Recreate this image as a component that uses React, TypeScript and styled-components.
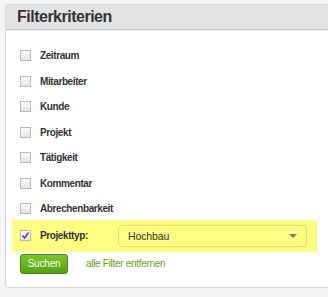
import styled, { createGlobalStyle } from "styled-components";

const GlobalStyle = createGlobalStyle`
  html, body {
    margin: 0;
    padding: 0;
    background: #f4f4f4;
    font-family: "Liberation Sans", Arial, sans-serif;
  }
`;

const Page = styled.div`
  width: 328px;
  height: 297px;
  padding: 4px 0 0 5px;
  box-sizing: border-box;
  overflow: hidden;
`;

const Panel = styled.div`
  width: 340px;
  height: 284px;
  box-sizing: border-box;
  background: #fff;
  border: 1px solid #d6d6d6;
  border-radius: 4px;
  overflow: hidden;
`;

const Header = styled.div`
  height: 24px;
  background: #e3e3e3;
  border-bottom: 1px solid #c9c9c9;
  box-shadow: 0 1px 0 #ececec;
  padding-left: 11px;
  display: flex;
  align-items: center;
`;

const Title = styled.h2`
  margin: 0;
  font-size: 16px;
  letter-spacing: -0.5px;
  font-weight: bold;
  color: #333;
`;

const Body = styled.div`
  padding: 13px 0 0 6px;
  display: flex;
  flex-direction: column;
`;

const Row = styled.div<{ $highlight?: boolean }>`
  height: ${(p) => (p.$highlight ? "32px" : "25.5px")};
  margin-top: ${(p) => (p.$highlight ? "-2px" : "0")};
  display: flex;
  align-items: center;
  width: 305px;
  padding-left: 8px;
  box-sizing: border-box;
  background: ${(p) => (p.$highlight ? "#fdfd82" : "transparent")};
`;

const Box = styled.span<{ $checked?: boolean }>`
  width: 9px;
  height: 9px;
  border: 1px solid #b9b9b9;
  background: linear-gradient(#fbfbfb, #e4e4e4);
  display: flex;
  align-items: center;
  justify-content: center;
  flex-shrink: 0;
`;

const Label = styled.span`
  margin-left: 9px;
  font-size: 10px;
  letter-spacing: -0.4px;
  font-weight: bold;
  color: #333;
  width: 78px;
`;

const Select = styled.div`
  width: 189px;
  height: 22px;
  box-sizing: border-box;
  border: 1px solid #e2dc6a;
  border-radius: 4px;
  display: flex;
  align-items: center;
  justify-content: space-between;
  padding: 0 9px 0 9px;
  font-size: 10.5px;
  letter-spacing: -0.1px;
  color: #333;
`;

const Arrow = styled.span`
  width: 0;
  height: 0;
  border-left: 4px solid transparent;
  border-right: 4px solid transparent;
  border-top: 4px solid #777;
`;

const Actions = styled.div`
  display: flex;
  align-items: center;
  padding: 2px 0 0 8px;
  gap: 18px;
`;

const Button = styled.button`
  width: 48px;
  height: 20px;
  border: 1px solid #4b8a10;
  border-radius: 3px;
  background: linear-gradient(#80c62c, #559f14);
  color: #fff;
  font-family: inherit;
  font-size: 10px;
  letter-spacing: -0.2px;
  padding: 0;
`;

const Link = styled.a`
  color: #6aa121;
  font-size: 10px;
  letter-spacing: -0.3px;
  text-decoration: none;
`;

const filters = [
  "Zeitraum",
  "Mitarbeiter",
  "Kunde",
  "Projekt",
  "Tätigkeit",
  "Kommentar",
  "Abrechenbarkeit",
];

export default function App() {
  return (
    <>
      <GlobalStyle />
      <Page>
        <Panel>
          <Header>
            <Title>Filterkriterien</Title>
          </Header>
          <Body>
            {filters.map((f) => (
              <Row key={f}>
                <Box />
                <Label>{f}</Label>
              </Row>
            ))}
            <Row $highlight>
              <Box $checked>
                <svg width="9" height="9" viewBox="0 0 9 9">
                  <path d="M1.5 4.5 L3.5 7 L7.5 1.5" fill="none" stroke="#3a4a8a" strokeWidth="1.4" />
                </svg>
              </Box>
              <Label>Projekttyp:</Label>
              <Select>
                Hochbau
                <Arrow />
              </Select>
            </Row>
            <Actions>
              <Button>Suchen</Button>
              <Link href="#">alle Filter entfernen</Link>
            </Actions>
          </Body>
        </Panel>
      </Page>
    </>
  );
}
